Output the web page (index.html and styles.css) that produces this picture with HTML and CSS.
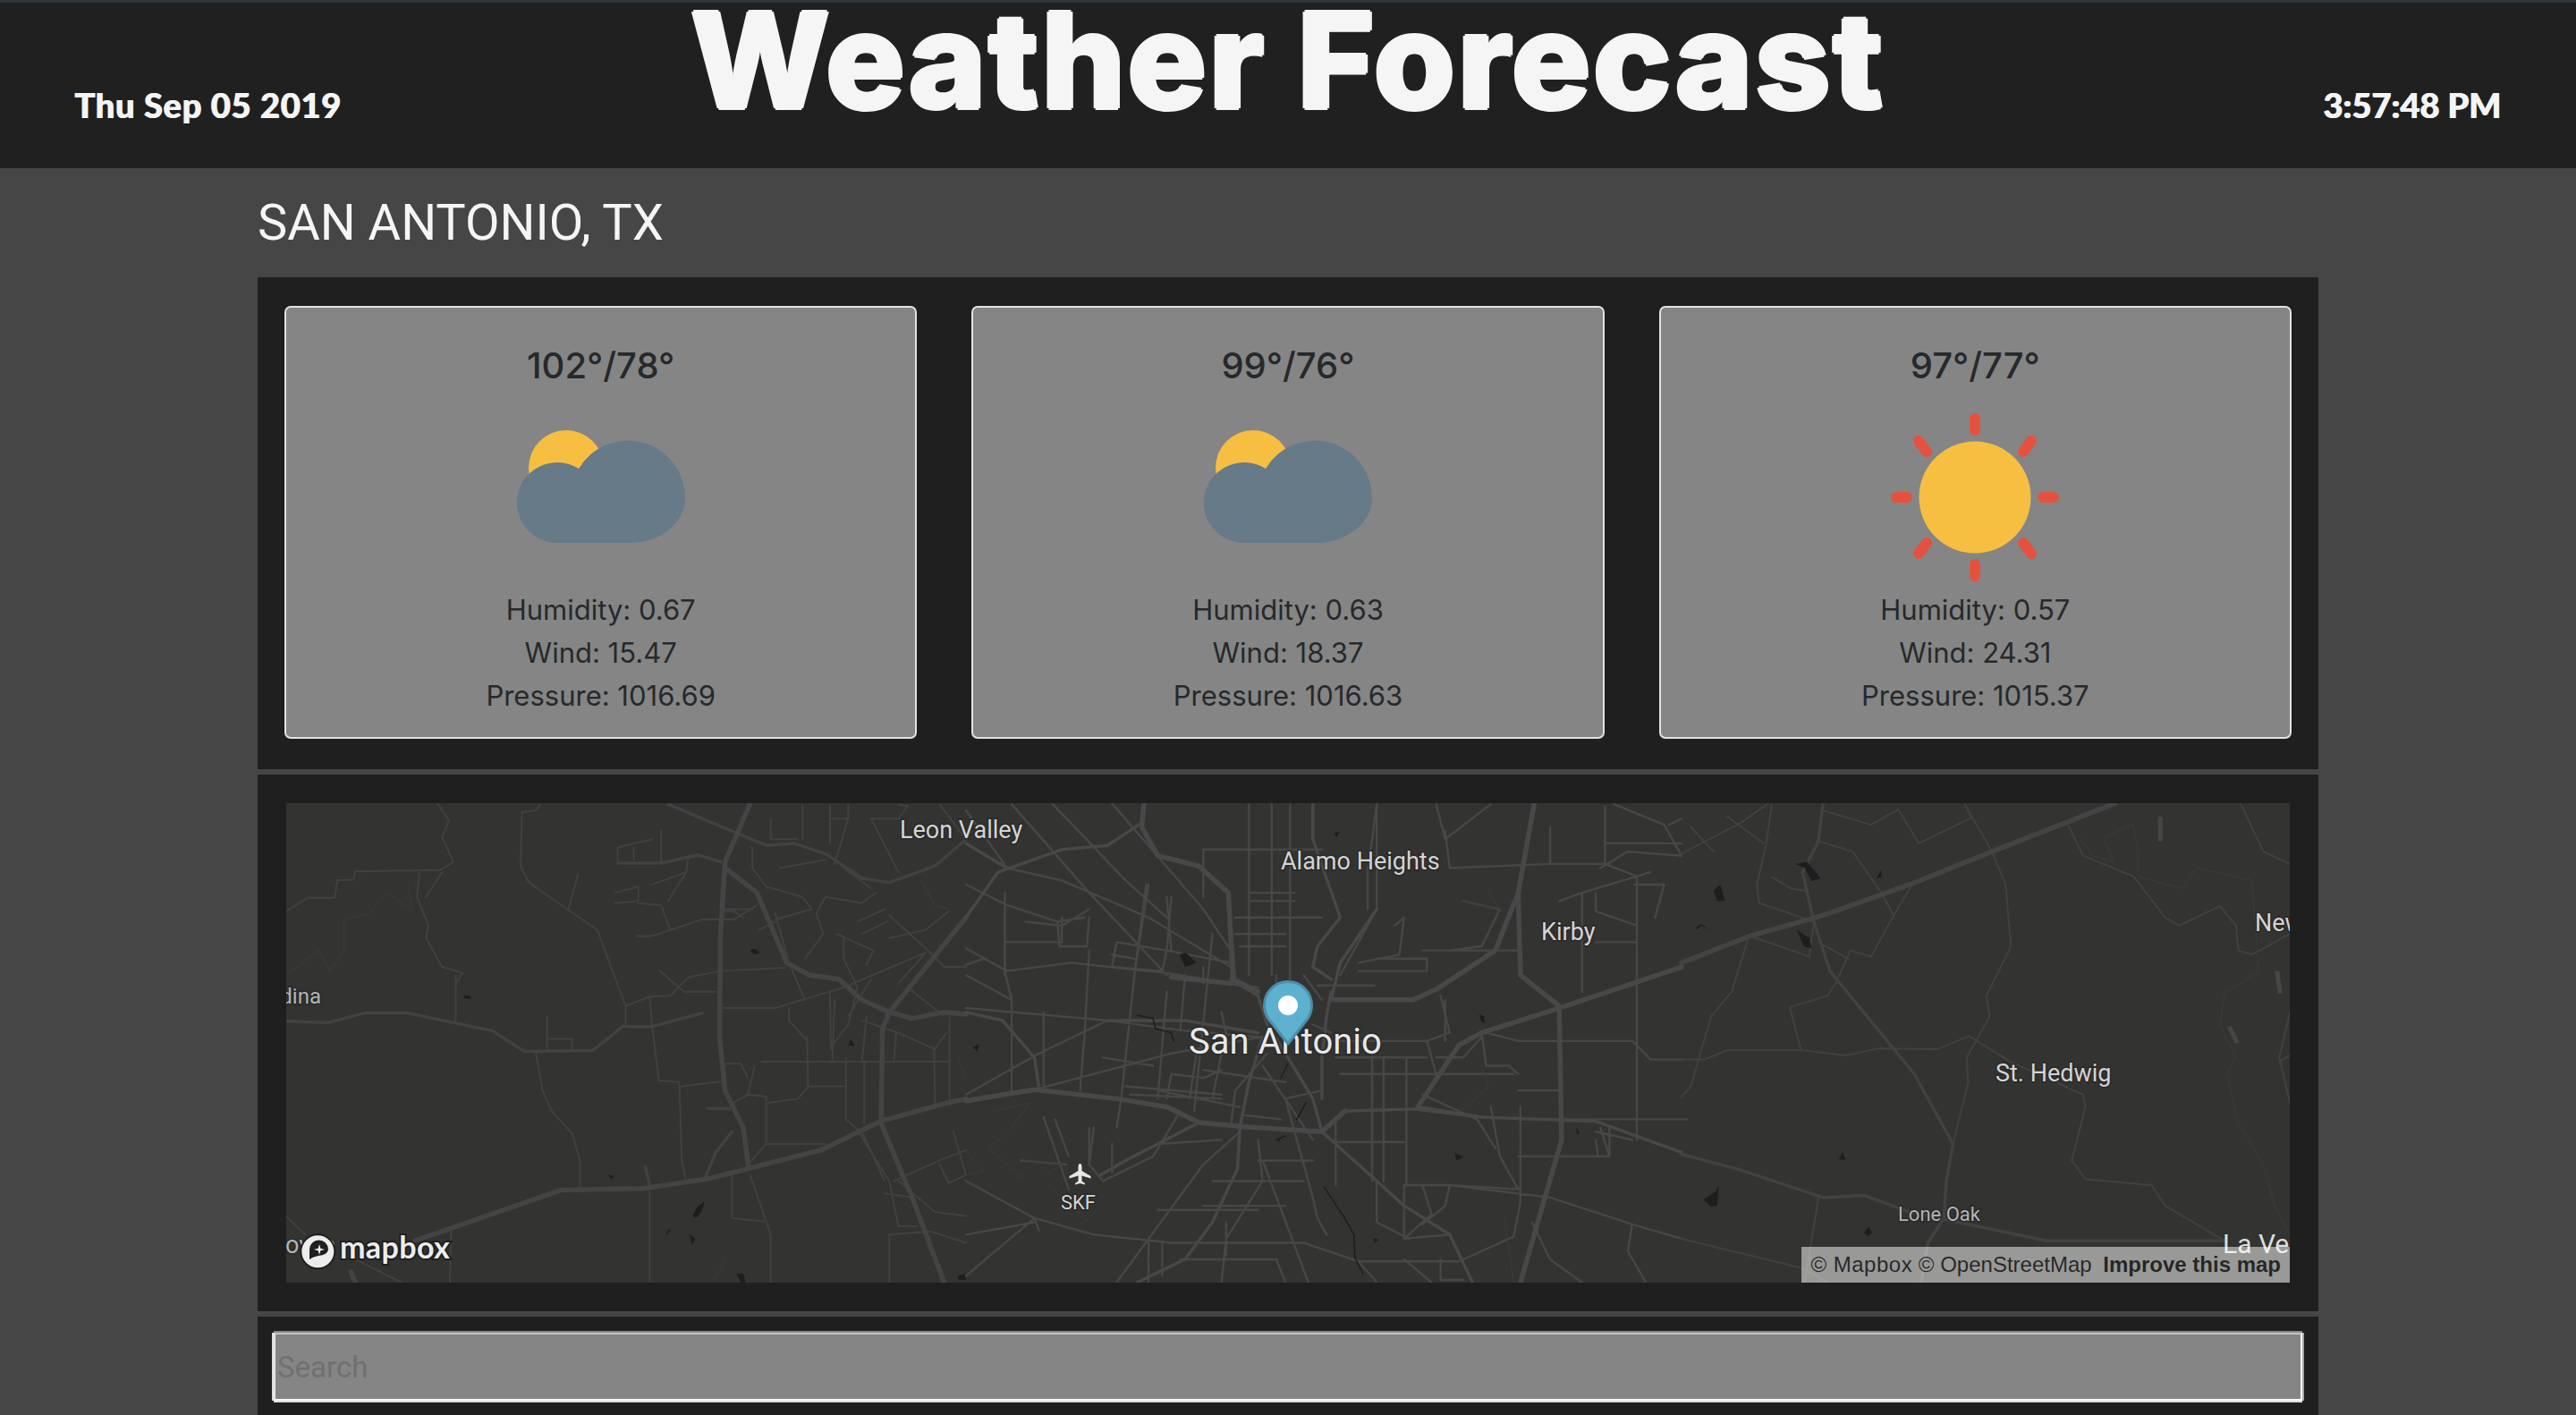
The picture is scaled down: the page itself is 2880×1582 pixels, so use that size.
FILE: index.html
```html
<!DOCTYPE html>
<html lang="en">
<head>
<meta charset="utf-8">
<title>Weather Forecast</title>
<link rel="stylesheet" href="styles.css">
</head>
<body>
<header class="topbar">
  <span class="stamp">Thu Sep 05 2019</span>
  <h1 class="title">Weather Forecast</h1>
  <span class="stamp stamp-end">3:57:48 PM</span>
</header>
<main class="content">
  <h2 class="city">SAN ANTONIO, TX</h2>
  <section class="panel forecast">
    <article class="card">
      <h3 class="temp">102°/78°</h3>
      <svg class="icon" viewBox="0 0 188 188"><circle class="sun" cx="55" cy="61" r="42"/><path class="cloud" d="M45 145A45 45 0 1 1 69 62A64 64 0 0 1 188 95C188 122 160 145 125 145Z"/></svg>
      <p class="stat">Humidity: 0.67</p>
      <p class="stat">Wind: 15.47</p>
      <p class="stat">Pressure: 1016.69</p>
    </article>
    <article class="card">
      <h3 class="temp">99°/76°</h3>
      <svg class="icon" viewBox="0 0 188 188"><circle class="sun" cx="55" cy="61" r="42"/><path class="cloud" d="M45 145A45 45 0 1 1 69 62A64 64 0 0 1 188 95C188 122 160 145 125 145Z"/></svg>
      <p class="stat">Humidity: 0.63</p>
      <p class="stat">Wind: 18.37</p>
      <p class="stat">Pressure: 1016.63</p>
    </article>
    <article class="card">
      <h3 class="temp">97°/77°</h3>
      <svg class="icon" viewBox="0 0 188 188"><circle class="sun" cx="94" cy="94" r="62.5"/><path class="ray" d="M94 6V19M94 169V182M6 94H18M170 94H182M31 31L40 43M148 43L157 31M31 157L40 145M148 145L157 157"/></svg>
      <p class="stat">Humidity: 0.57</p>
      <p class="stat">Wind: 24.31</p>
      <p class="stat">Pressure: 1015.37</p>
    </article>
  </section>
  <section class="panel map-panel">
    <div class="map">
      <svg class="map-art" viewBox="320 898 2240 536" width="2240" height="536">
        <rect class="land" x="320" y="898" width="2240" height="536"/>
        <g transform="translate(280 860) scale(.5102 .46046)">
          <path class="r3" d="M410 83L435 125L420 165L445 225L415 245L230 248L225 268L190 270L185 312L125 312L78 345M635 85L625 100L595 105L592 235L610 275L760 390L822 575V625M822 575L875 552L920 550L960 505L1030 490L1170 482M875 552L880 622L895 755L940 760L945 950L955 1000M945 770L1035 758M625 685L640 780L660 830L705 885L722 950V1020M845 405H880L990 365H1060L1110 330M1035 580H1150L1300 530L1480 445M1120 710H1530M1090 790L1130 795V910L1090 960M1130 910H1260M1220 650L1222 770L1200 800L1135 810M1222 770H1300M1305 700V850L1330 875L1400 1000L1420 1110H1460M1345 710V860M1532 600V815M875 1020V1246M1140 1246V1130L1095 985M1055 985V1090L1125 1098M440 1115L437 1246M1400 1246V1130L1490 1122L1568 1150M1420 1000L1500 1075L1568 1085M1270 540L1272 680M1180 580V610L1220 660M450 500V612M78 1085L120 1130M230 1190L330 1246M370 250L365 310L390 380L385 410L420 480L465 495L450 520M420 250L385 310M897 490L950 540H1020M650 600V685M650 655H705V685M718 255L697 340M1035 345H1060L1080 360M1150 350L1180 470L1215 560M1115 390L1150 370M1260 310L1240 350L1255 400L1215 460M1260 310L1340 325L1370 300M1285 400L1365 440L1350 475M1300 410V460L1330 530L1310 620L1275 670M1330 370L1390 340M1340 400L1395 370M1400 355L1480 435L1520 480H1568M1400 410L1480 390L1530 345M1360 510L1310 600M1480 445L1420 520M1340 610L1420 640L1500 680L1525 640M1415 640L1410 710M1498 680L1500 810M1410 1000L1510 950L1568 925M1510 960L1530 1005L1568 985L1540 880M1340 880L1390 1000M1390 1030L1450 1040M1160 240L1260 220M1100 190V240L1130 285L1210 310L1230 340L1150 365M805 228V190L880 170M840 220V190M900 228V150M960 210L955 250L880 280M800 300L850 285V320L800 325M850 325L900 330L920 390M955 250L915 320M1030 340H1100M1140 120V170H1200M1210 85V170M1270 120H1310M1270 85V180M1310 85V120L1280 230M1360 120H1420L1440 90L1420 85M1360 120L1420 250M1510 85L1568 170M1440 530L1520 600M1300 240L1360 290M1280 560L1275 710M1350 600L1340 710M1105 720L1090 790L1050 815M1040 715H1075L1090 750M1050 890L1020 930"/>
          <path class="r4" d="M78 500L150 440L175 490L205 440V365L260 350L300 300L355 345L345 280M1040 1190L1015 1246M1470 270L1500 330L1530 340M1550 700L1568 750"/>
          <path class="r2" d="M915 85L1130 185L1190 180L1260 205L1340 265L1400 275L1500 235L1568 170M805 228H900L980 208L1030 225M78 612L170 615L250 592H345L530 635L600 685L750 683L815 625H880L990 592M1002 824H1050M1055 880L1020 930L995 995M865 965L875 1010"/>
          <path class="r1" d="M1095 83L1040 225L1030 400L1028 650L1040 780L1080 870L1092 970M1040 240L1110 300L1175 470L1225 500L1290 510L1340 560L1400 590L1450 605L1520 590L1568 595M360 1145L680 1022L860 1018L1000 995L1090 970L1250 925L1380 855L1510 815L1568 800M1568 360L1400 590L1385 630L1382 860L1450 1040L1520 1246M220 1220L230 1246"/>
          <path class="water" d="M1095 440Q1105 430 1115 445Q1105 455 1095 440ZM467 550H480L484 558L468 556ZM1310 670L1316 655L1324 672ZM783 985L796 987L792 997ZM970 1085Q975 1060 995 1050Q990 1080 975 1090ZM910 1135L915 1118H922ZM962 1128L975 1140L968 1155ZM1065 1225H1080L1085 1246H1075ZM1550 1230L1568 1225V1240H1552Z"/>
        </g>
        <g class="downtown" transform="translate(1080 860) scale(.5102 .46046)">
          <path class="r3" d="M620 85V500M670 83V500M710 83V510M900 83V340L820 500M520 195H780M520 195V310M590 360H780M0 435L90 490L230 470L440 495M440 495L580 520M100 85L270 300L440 500M190 85L350 270L440 360M450 505L640 530M0 580L310 610L480 635L640 650M310 610L160 690L0 790M370 490L340 800L330 870M270 440L260 640L250 780M100 550V780M170 590V770M440 540L420 800M540 400L500 830M160 775L450 690L650 650M170 845L225 1020M195 850L225 940M0 1000L150 1090L280 1130L450 1150H740L860 1195H1080L1200 1135L1215 1050V820M0 1130L150 1100M330 1246L520 960L600 880M420 910L560 900M360 790L560 800M640 900L650 1000L570 1140L560 1246M650 950L750 1246M820 740H1200M890 690V1000M915 700V1000M965 700V1010M810 700H1010M810 850V1010M810 905H960M960 1010H1060L1210 1020M1060 1010L1280 1040L1460 1105L1568 1140M1210 660H1460L1500 705H1568M1010 660L1030 740M1050 560V660M1030 83L1050 170L1150 85M1050 150L1060 240L1280 230H1400M1280 140V230M1400 90V230L1470 260V900M1300 320L1350 300L1500 250M1350 300V540M1210 440H1000M1470 420H1380M1090 320L1170 340L1130 430L1060 440M1540 135L1568 120M1420 85L1530 135L1568 210M1400 180H1568M1390 240L1450 200L1568 210M1465 280H1530L1510 360M1380 300V345L1470 380M0 100L90 240L210 270L400 360L580 480M85 300V500M85 420H210V360M330 420L320 480L430 490M0 500L100 560M580 360L590 510M130 370L210 380L270 340M620 300H720M625 320H720M450 310L440 440L430 490M400 280L370 490M660 690L590 780L580 870M520 730L700 760M450 740L520 750L560 730M420 780L600 820M470 830L410 940L300 1000L270 960V870M120 950L220 960M280 870L270 960M320 910V980M700 800L780 780M650 720L760 900M540 1000H740M520 1060H700M420 1070H640M400 1150V1246M430 1150V1230M470 1190H680L700 1246M570 1100V1180M960 1010V1140L1060 1130M900 1000V1100L970 1140M1000 1010L1020 1080L960 1140M1060 1010L1050 1060L1000 1105M1040 1190V1240H1090M1150 820L1170 940L1210 1020M1210 940H1410V870M1210 850H1580M1210 780H1300M1390 870L1410 940M1380 880L1460 900M1380 900L1385 940M1460 1105L1450 1170L1490 1246M1130 640L1140 720H1190L1210 740M1030 700H1090L1130 650M150 1090L0 1230M150 1090L160 1120M1350 1246L1280 1190L1240 1100M860 1195L900 1246M960 1190L1020 1246M320 83L520 340L580 440M0 280L90 330L200 370L260 360M200 370L205 430H265L270 360M395 280L370 490M440 310L450 440M330 420L440 440L580 470M320 450L370 460M0 475L40 460L90 490M100 560L85 490M880 340V250L890 170L900 83M940 380L960 360L950 450L860 470M900 460H1010V490H860M770 525H895M1040 550L1060 640L1010 660L820 660M640 950H760M700 800L760 1040L770 1090L790 1130M610 840L690 850M520 480V520M560 590L570 640M760 620L800 640M680 500V540M740 500L780 560M1140 640L1210 660M1000 790L1120 850M1120 850L1160 920M600 430H700M590 400H700M480 500L470 630M300 700L410 720M350 770L560 790M450 740L440 800M505 690L490 800M560 690L540 800"/>
          <path class="r4" d="M60 830L140 810L100 870L50 920L130 1000M0 930L40 975L0 985M125 950L210 960L175 985M180 1010L240 1070L270 1100M1090 320L1170 340L1145 300M1085 830L1145 770L1130 720M1180 1090L1200 1246"/>
          <path class="r2" d="M830 830L980 825L1130 845L1380 855L1530 915L1568 930M580 510L640 550L660 620L700 690L760 800L780 880L830 930L960 1060L1060 1130L1110 1246M800 540L790 600L780 700V800M900 340L820 470L800 560M760 83V170L820 360L770 430L760 480L800 510M0 360L70 250L210 195L310 185L385 130M90 240L0 180M600 870L595 970L540 1100L480 1190L375 1246M0 590L80 610L150 700L160 775M510 858L420 910L350 950L295 985M310 610H480L640 640M650 650L620 760L600 870M990 820L1130 845"/>
          <path class="r1" d="M0 805L150 778L330 800L440 820L510 858L610 868L780 880L830 830M390 83L385 140L420 210L510 235L575 300L585 510L640 540M805 560H980L1030 535L1160 440L1210 300L1245 85M1568 480L1300 580L1130 640L1080 670L990 820M1210 300L1215 500L1300 575L1305 900L1215 1246M450 505L580 520"/>
          <path class="water" d="M468 450L482 445L505 470L480 480ZM15 675L28 668L25 685ZM806 155L818 152L812 165ZM1125 595L1135 600L1138 618L1128 612ZM1070 930L1090 942L1075 950ZM892 1138L905 1143L895 1150ZM1338 870L1345 885H1338ZM690 905Q680 895 700 893L680 900Z"/>
          <path class="creek" d="M375 597L410 605L415 630L450 640L455 660M690 750L705 715M745 810L725 850M680 900L700 890M785 1015L830 1090L850 1130L852 1185L870 1225"/>
        </g>
        <g transform="translate(1880 860) scale(.5102 .46046)">
          <path class="r3" d="M620 83L680 200L710 280L722 430L668 550L675 600L625 700L628 760L595 910M0 705H50L100 682H260L360 695L430 678L560 680L630 648L720 710L880 790L885 820L855 950L885 995L1030 1010L1060 1060L1190 1145M300 175L375 200L435 295L465 355L415 455L370 440L340 515L320 550L237 578L262 682M300 420L365 460M290 370L170 325L165 280L185 185L198 83M150 405L280 455L290 370M145 415L110 540L65 600L20 770L0 795M505 280L465 355M310 100L415 135L475 98L520 180L635 118L620 83M0 205L130 130L190 83M100 115L180 180M20 140L70 200M845 130L880 210L990 260L1060 360L1090 380L1180 332L1215 380L1220 440L1250 450L1333 400M1225 83L1275 200L1333 230M1310 700L1333 590M1310 700L1333 810M1310 710L1333 695M300 1040L270 1246M0 1140L260 1210L320 1246M200 263L240 290L270 295"/>
          <path class="r4" d="M870 160L900 210L945 225L925 165L990 135L1000 200V260L1095 290L1130 240L1250 270L1265 490L1190 545L1180 620L1215 700L1195 740L1220 860L1275 960L1300 1060L1333 1130"/>
          <path class="r2" d="M310 83L300 175L265 250L290 370L325 490L510 740L595 910L580 1000L575 1090L540 1150L525 1246M0 935L120 970L310 1040L400 1035L500 1075L800 1145H1190"/>
          <path class="r1" d="M0 470L150 405L310 355L500 280L680 200L950 83"/>
          <path class="dash" d="M1049 115V175M1305 490L1312 545M1200 625L1218 665"/>
          <path class="water" d="M250 230L275 225L305 265L285 272L270 240ZM70 295L85 280L95 320H78ZM30 390Q40 365 58 390L45 380ZM252 390L280 410L285 435L268 430ZM427 265L438 243V262ZM345 948L352 930L360 948ZM48 1045L75 1025L82 1010L78 1060L65 1062ZM400 1125L410 1112L418 1125L408 1135Z"/>
        </g>
        <text class="lab" x="1006" y="937">Leon Valley</text>
        <text class="lab" x="1432" y="972">Alamo Heights</text>
        <text class="lab" x="1723" y="1051">Kirby</text>
        <text class="lab" x="2231" y="1209">St. Hedwig</text>
        <text class="lab dim clipped" x="359" y="1122" text-anchor="end">Medina</text>
        <text class="lab dim" x="319" y="1401">ovile</text>
        <text class="lab" x="2521" y="1041">New</text>
        <text class="lab small dim" x="2122" y="1365">Lone Oak</text>
        <text class="lab small" x="1186" y="1352">SKF</text>
        <text class="lab big" x="1329" y="1178">San Antonio</text>
        <text class="lab la" x="2485" y="1401">La Ver</text>
        <path class="plane" d="M1207.500 1301c1.500 0 2 2 2 4v4l10 6v2.500l-10-3v6l3.500 2.500v1.500l-5.500-1.500l-5.500 1.500v-1.500l3.500-2.500v-6l-10 3v-2.500l10-6v-4c0-2 .5-4 2-4z"/>
        <path class="pin" d="M1440 1167L1418 1139Q1413.500 1132 1413.500 1124A26.500 26.500 0 0 1 1466.500 1124Q1466.500 1132 1462 1139Z"/>
        <circle class="pin-dot" cx="1440" cy="1124" r="11"/>
        <circle class="logo-disc" cx="355.300" cy="1399.300" r="19"/>
        <path class="logo-in" d="M346 1408V1397A10.500 10.500 0 0 1 367 1397Q366 1403 356 1404Q350 1405 346 1408Z"/>
        <path class="logo-star" d="M357 1391L358.300 1395.700L363 1397L358.300 1398.300L357 1403L355.700 1398.300L351 1397L355.700 1395.700Z"/>
        <text class="logo-word" x="380" y="1407">mapbox</text>
      </svg>
      <div class="attrib"><span class="owner">© Mapbox</span> <span>© OpenStreetMap</span> <b class="improve">Improve this map</b></div>
    </div>
  </section>
  <section class="panel search-panel">
    <input class="search" type="text" placeholder="Search">
  </section>
</main>
</body>
</html>
```
FILE: styles.css
```css
* { box-sizing: border-box; }
html, body { margin: 0; height: 1582px; overflow: hidden; }
body { background: #464646; font-family: "Inter", "Liberation Sans", sans-serif; }
.topbar {
  height: 188px;
  border-top: 3px solid #30353a;
  background: #202020;
  color: #f5f5f5;
  display: grid;
  grid-template-columns: 1fr auto 1fr;
  align-items: start;
  padding: 0 84px 0 83px;
}
.title {
  margin: 0;
  font: 800 148px/130px "Inter", sans-serif;
  letter-spacing: 2.2px;
  color: #f5f5f5;
  white-space: nowrap;
  text-shadow: 2px 0 #f5f5f5, -2px 0 #f5f5f5, 0 2px #f5f5f5, 0 -2px #f5f5f5;
}
.stamp {
  margin-top: 90px;
  font: 900 38px/48px "Lato", sans-serif;
  letter-spacing: .7px;
  text-shadow: 1px 0 #f5f5f5;
}
.stamp-end { justify-self: end; letter-spacing: 0; }
.content { margin: 0 288px; display: flex; flex-direction: column; gap: 6px; }
.city {
  margin: 0 0 -6px;
  height: 122px;
  font: 400 56px/122px "Roboto", sans-serif;
  color: #f5f5f5;
}
.panel { background: #1f1f1f; }
.forecast {
  height: 550px;
  padding: 32px 30px 34px;
  display: grid;
  grid-template-columns: repeat(3, 1fr);
  column-gap: 61px;
}
.card {
  border: 2px solid #e2e2e2;
  border-radius: 7px;
  background: #858585;
  color: #26292c;
  text-align: center;
  padding-top: 35px;
}
.temp { margin: 0 0 23px; font: 500 40px/60px "Inter", sans-serif; }
.icon { display: block; width: 188px; height: 188px; margin: 0 auto 8px; }
.sun { fill: #f6bf42; }
.cloud { fill: #667a88; }
.ray { fill: none; stroke: #e4523f; stroke-width: 12; stroke-linecap: round; }
.stat { margin: 0; font: 400 31px/48px "Inter", sans-serif; }
.map-panel { height: 600px; padding: 32px; }
.map { position: relative; height: 536px; overflow: hidden; background: #333331; }
.map-art { display: block; }
.land { fill: #333331; }
.map-art path { vector-effect: non-scaling-stroke; fill: none; stroke-linejoin: round; stroke-linecap: round; }
.map-art .r1 { stroke: #444444; stroke-width: 5.5; }
.map-art .r2 { stroke: #424242; stroke-width: 3.5; }
.map-art .r3 { stroke: #414141; stroke-width: 2; }
.map-art .r4 { stroke: #3c3c3b; stroke-width: 1; }
.downtown .r3 { stroke: #474747; stroke-width: 2.4; }
.downtown .r2 { stroke: #484848; }
.downtown .r1 { stroke: #484848; }
.map-art .dash { stroke: #464646; stroke-width: 5; stroke-linecap: butt; }
.map-art .water { fill: #1e1e1e; stroke: none; }
.map-art .creek { stroke: #1e1e1e; stroke-width: 1.5; }
.lab {
  font: 400 27px "Roboto", sans-serif;
  fill: #d4d4d4;
  stroke: #2a2a2a;
  stroke-width: 3px;
  paint-order: stroke;
}
.lab.dim { fill: #b4b4b4; }
.lab.clipped { font-size: 24px; }
.lab.small { font-size: 22px; }
.lab.big { font-size: 40px; fill: #e8e8e8; }
.lab.la { font-size: 30px; fill: #dedede; stroke: none; }
.map-art .plane { fill: #e6e6e6; }
.map-art .pin { fill: #5eb0cf; stroke: #4b8fa9; stroke-width: 3; }
.pin-dot { fill: #fff; }
.logo-disc { fill: #ececec; stroke: #1f1f1f; stroke-width: 2px; }
.map-art .logo-in { fill: #1f1f1f; stroke: none; }
.map-art .logo-star { fill: #f2f2f2; stroke: none; }
.logo-word {
  font: 700 34px "Lato", sans-serif;
  letter-spacing: .4px;
  fill: #ececec;
  stroke: #1f1f1f;
  stroke-width: 4px;
  paint-order: stroke;
}
.attrib {
  position: absolute;
  right: 0;
  bottom: 0;
  padding: 0 10px;
  background: rgba(255, 255, 255, .5);
  font: 400 24px/40px "Liberation Sans", sans-serif;
  color: rgba(0, 0, 0, .75);
  white-space: nowrap;
}
.owner { letter-spacing: .5px; }
.improve { font-weight: 700; margin-left: 6px; }
.search-panel { height: 120px; padding: 16px; }
.search {
  display: block;
  width: calc(100% - 4px);
  height: 76px;
  margin: 2px;
  padding: 0 0 0 2px;
  border: 2px solid;
  border-color: #c4c4c4 #fafafa #fafafa #e6e6e6;
  box-shadow: 0 -2px #8a8a8a, 2px 0 #a8a8a8, 0 2px #dedede, -2px 0 #dedede;
  background: #858585;
  font: 400 33px "Roboto", sans-serif;
  color: #222;
  outline: none;
}
.search::placeholder { color: #707070; opacity: 1; }
```
